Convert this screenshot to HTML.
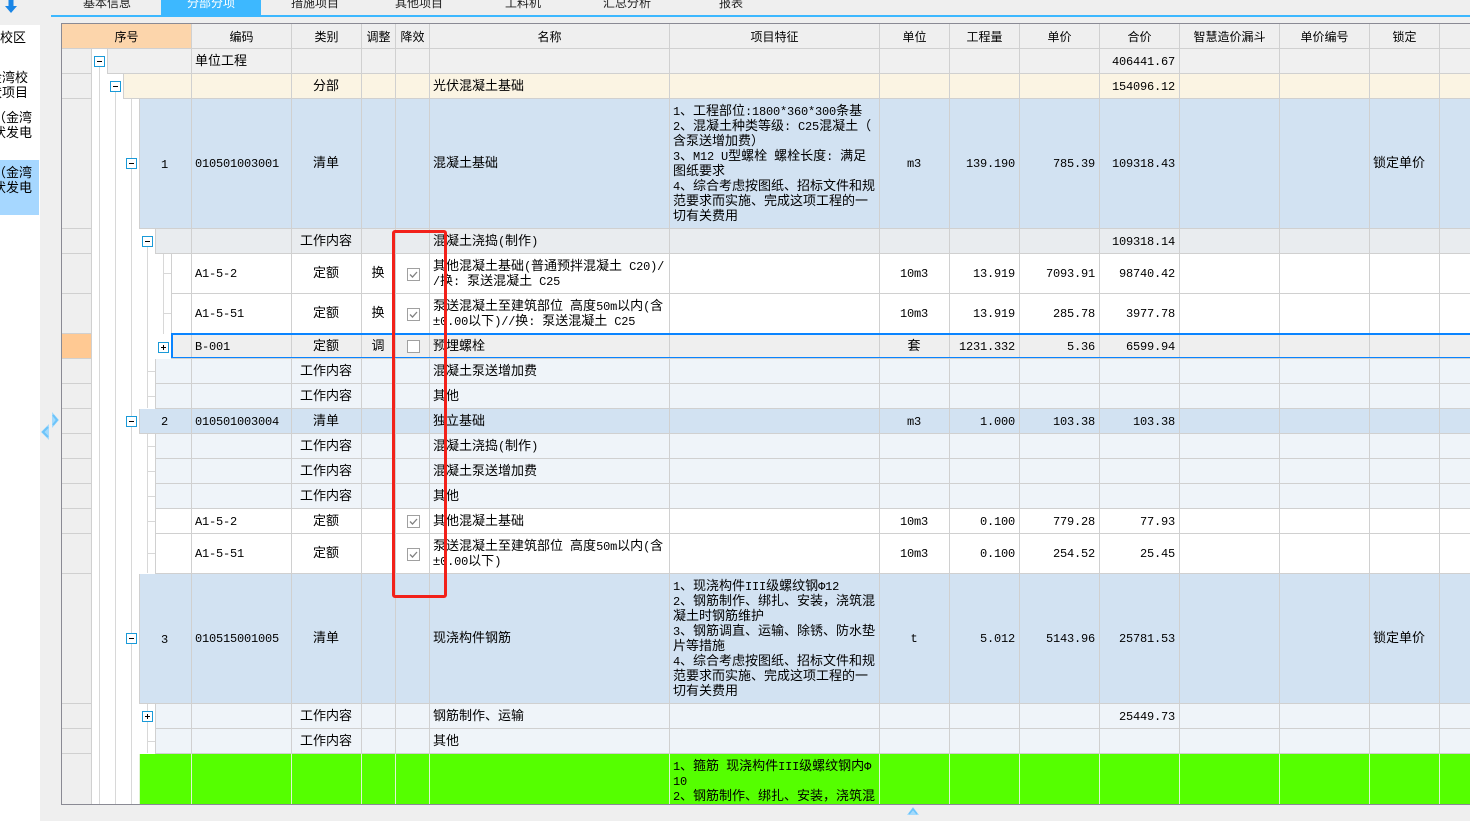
<!DOCTYPE html>
<html lang="zh">
<head>
<meta charset="utf-8">
<title>分部分项</title>
<style>
html,body{margin:0;padding:0;background:#efefef}
body{width:1470px;height:821px;position:relative;overflow:hidden;font-family:"Liberation Sans","WenQuanYi Zen Hei","Noto Sans CJK SC",sans-serif;font-size:13px;color:#000}
#side{position:absolute;left:0;top:25px;width:40px;height:796px;background:#fff;overflow:hidden}
#side div{position:absolute;left:-70px;width:102px;text-align:right;white-space:nowrap;line-height:15px}
#side #sel{left:0;top:135px;width:39px;height:55px;background:#a6d7ff}
.tab{position:absolute;top:-4px;height:14px;line-height:14px;font-size:12px;color:#222;white-space:nowrap}
#active{position:absolute;left:161px;top:0;width:100px;height:15px;background:#3db8ff}
#bar{position:absolute;left:51px;top:15px;width:1419px;height:2px;background:#3db8ff}
#grid{position:absolute;left:61px;top:23px;width:1409px;height:780px;border-top:1px solid #8a8a94;border-left:1px solid #8a8a94;border-bottom:1px solid #8a8a94;box-sizing:content-box;overflow:hidden;background:#fff}
#layer{position:absolute;left:-62px;top:-24px;width:1470px;height:821px}
.b{position:absolute;box-sizing:border-box;border-left:1px solid #d0d0d0;border-bottom:1px solid #d0d0d0;display:block}
.v{position:absolute;width:1px;background:#d8d8d8;display:block}
.h{position:absolute;height:1px;width:8px;background:#d8d8d8;display:block}
table{position:absolute;left:0;top:0;border-collapse:separate;border-spacing:0;table-layout:fixed;width:1409px}
td{box-sizing:border-box;padding:0 4px 2px 3px;border-right:1px solid #d0d0d0;border-bottom:1px solid #d0d0d0;vertical-align:middle;white-space:nowrap;overflow:hidden;line-height:15px;font-size:13px}
td.c{text-align:center;padding:0 1px 2px 0}
td.r{text-align:right}
td.t{background:transparent!important;border-bottom:0;padding:0 0 2px 46px;text-align:center}
td.n{background:#efefef!important}
tr.hd td{background:#efefef;text-align:center;font-size:12px;padding:2px 0 0;color:#000}
tr.hd td.o{background:#fcd5ab}
tr.u td{background:#f0f0f0}
tr.f td{background:#fbf4e3}
tr.q td{background:#d2e2f2}
tr.w td{background:#e9ecef}
tr.g td{background:#eff4f9}
tr.d td{background:#fff}
tr.s td{background:#efefef}
tr.e td{background:#55ff00;border-color:#dff5d2;vertical-align:top;padding-top:4px}
tr.e td.n{border-color:#d0d0d0}
tr.e td.t{border-color:#dff5d2}
b{font-family:"Liberation Mono",monospace;font-weight:normal;font-size:12px;letter-spacing:-.2px;line-height:0}
.box{position:absolute;width:9px;height:9px;border:1px solid #1a9ad8;background:#fff;display:block;line-height:0}
.box:before{content:"";position:absolute;left:2px;top:4px;width:5px;height:1px;background:#000}
.p:after{content:"";position:absolute;left:4px;top:2px;width:1px;height:5px;background:#000}
.ck{display:inline-block;width:11px;height:11px;border:1px solid #a0a0a0;background:#fff;position:relative;vertical-align:middle;margin:3px 0 0 2px}
.ck svg{position:absolute;left:0;top:0}
#out{position:absolute;left:171px;top:333px;width:1320px;height:25px;box-sizing:border-box;border:2px solid #0a84ff;border-bottom-width:1px;pointer-events:none}
#red{position:absolute;left:392px;top:230px;width:55px;height:368px;box-sizing:border-box;border:3px solid #f2211a;border-radius:3px}
svg.abs{position:absolute}
</style>
</head>
<body>
<svg class="abs" style="left:5px;top:0" width="12" height="13" viewBox="0 0 12 13"><path d="M3.5 0h5v6H12L6 13 0 6h3.5z" fill="#1a86e6"/></svg>

<div class="tab" style="left:83px">基本信息</div>
<div id="active"></div>
<div class="tab" style="left:187px;color:#fff">分部分项</div>
<div class="tab" style="left:291px">措施项目</div>
<div class="tab" style="left:395px">其他项目</div>
<div class="tab" style="left:505px">工料机</div>
<div class="tab" style="left:603px">汇总分析</div>
<div class="tab" style="left:719px">报表</div>
<div id="bar"></div>

<div id="side">
<div id="sel"></div>
<div style="top:5px;width:96px">校区</div>
<div style="top:45px;width:98px">金湾校</div>
<div style="top:60px;width:98px">光伏项目</div>
<div style="top:85px">（金湾</div>
<div style="top:100px">光伏发电</div>
<div style="top:140px">（金湾</div>
<div style="top:155px">光伏发电</div>
</div>

<svg class="abs" style="left:40px;top:410px" width="20" height="32" viewBox="0 0 20 32">
<path d="M12 2l7 8-7 8z" fill="#a4dafc"/><path d="M13 5l4 5-4 5" fill="none" stroke="#6cc4fa" stroke-width="2"/>
<path d="M9 14l-8 8 8 8z" fill="#a4dafc"/><path d="M8 17l-5 5 5 5" fill="none" stroke="#6cc4fa" stroke-width="2"/>
</svg>
<svg class="abs" style="left:907px;top:807px" width="12" height="9" viewBox="0 0 12 9"><path d="M6 0l6 8H0z" fill="#a4dafc"/><path d="M2 7l4-5 4 5" fill="none" stroke="#6cc4fa" stroke-width="1.6"/></svg>

<div id="grid">
<div id="layer">
<i class="b" style="left:107px;top:49px;width:84px;height:25px;background:#f0f0f0"></i>
<i class="b" style="left:123px;top:74px;width:68px;height:25px;background:#fbf4e3"></i>
<i class="b" style="left:139px;top:99px;width:52px;height:130px;background:#d2e2f2"></i>
<i class="b" style="left:155px;top:229px;width:36px;height:25px;background:#e9ecef"></i>
<i class="b" style="left:171px;top:254px;width:20px;height:40px;background:#fff"></i>
<i class="b" style="left:171px;top:294px;width:20px;height:40px;background:#fff"></i>
<i class="b" style="left:171px;top:334px;width:20px;height:25px;background:#efefef"></i>
<i class="b" style="left:155px;top:359px;width:36px;height:25px;background:#eff4f9"></i>
<i class="b" style="left:155px;top:384px;width:36px;height:25px;background:#eff4f9"></i>
<i class="b" style="left:139px;top:409px;width:52px;height:25px;background:#d2e2f2"></i>
<i class="b" style="left:155px;top:434px;width:36px;height:25px;background:#eff4f9"></i>
<i class="b" style="left:155px;top:459px;width:36px;height:25px;background:#eff4f9"></i>
<i class="b" style="left:155px;top:484px;width:36px;height:25px;background:#eff4f9"></i>
<i class="b" style="left:155px;top:509px;width:36px;height:25px;background:#fff"></i>
<i class="b" style="left:155px;top:534px;width:36px;height:40px;background:#fff"></i>
<i class="b" style="left:139px;top:574px;width:52px;height:130px;background:#d2e2f2"></i>
<i class="b" style="left:155px;top:704px;width:36px;height:25px;background:#eff4f9"></i>
<i class="b" style="left:155px;top:729px;width:36px;height:25px;background:#eff4f9"></i>
<i class="b" style="left:139px;top:754px;width:52px;height:60px;background:#55ff00;border-color:#dff5d2"></i>

<i class="v" style="left:99px;top:66px;height:740px"></i>
<i class="v" style="left:115px;top:91px;height:715px"></i>
<i class="v" style="left:131px;top:99px;height:707px"></i>
<i class="v" style="left:147px;top:247px;height:161px"></i>
<i class="v" style="left:147px;top:434px;height:139px"></i>
<i class="v" style="left:147px;top:704px;height:49px"></i>
<i class="v" style="left:163px;top:254px;height:80px"></i>
<i class="h" style="left:163px;top:273px"></i>
<i class="h" style="left:163px;top:313px"></i>
<i class="h" style="left:147px;top:371px"></i>
<i class="h" style="left:147px;top:396px"></i>
<i class="h" style="left:147px;top:446px"></i>
<i class="h" style="left:147px;top:471px"></i>
<i class="h" style="left:147px;top:496px"></i>
<i class="h" style="left:147px;top:521px"></i>
<i class="h" style="left:147px;top:553px"></i>
<i class="h" style="left:147px;top:741px"></i>

<table style="left:62px;top:24px">
<colgroup><col style="width:30px"><col style="width:100px"><col style="width:100px"><col style="width:70px"><col style="width:34px"><col style="width:34px"><col style="width:240px"><col style="width:210px"><col style="width:70px"><col style="width:70px"><col style="width:80px"><col style="width:80px"><col style="width:100px"><col style="width:90px"><col style="width:70px"><col style="width:31px"></colgroup>
<tr class="hd" style="height:25px"><td class="o" colspan="2">序号</td><td>编码</td><td>类别</td><td>调整</td><td>降效</td><td>名称</td><td>项目特征</td><td>单位</td><td>工程量</td><td>单价</td><td>合价</td><td>智慧造价漏斗</td><td>单价编号</td><td>锁定</td><td></td></tr>
<tr class="u" style="height:25px"><td class="n"></td><td class="t"></td><td>单位工程</td><td></td><td></td><td></td><td></td><td></td><td></td><td></td><td></td><td class="r"><b>406441.67</b></td><td></td><td></td><td></td><td></td></tr>
<tr class="f" style="height:25px"><td class="n"></td><td class="t"></td><td></td><td class="c">分部</td><td></td><td></td><td>光伏混凝土基础</td><td></td><td></td><td></td><td></td><td class="r"><b>154096.12</b></td><td></td><td></td><td></td><td></td></tr>
<tr class="q" style="height:130px"><td class="n"></td><td class="t"><b>1</b></td><td><b>010501003001</b></td><td class="c">清单</td><td></td><td></td><td>混凝土基础</td><td><b>1</b>、工程部位<b>:1800*360*300</b>条基<br><b>2</b>、混凝土种类等级<b>: C25</b>混凝土（<br>含泵送增加费）<br><b>3</b>、<b>M12 U</b>型螺栓<b>&nbsp;</b>螺栓长度<b>:&nbsp;</b>满足<br>图纸要求<br><b>4</b>、综合考虑按图纸、招标文件和规<br>范要求而实施、完成这项工程的一<br>切有关费用</td><td class="c"><b>m3</b></td><td class="r"><b>139.190</b></td><td class="r"><b>785.39</b></td><td class="r"><b>109318.43</b></td><td></td><td></td><td>锁定单价</td><td></td></tr>
<tr class="w" style="height:25px"><td class="n"></td><td class="t"></td><td></td><td class="c">工作内容</td><td></td><td></td><td>混凝土浇捣<b>(</b>制作<b>)</b></td><td></td><td></td><td></td><td></td><td class="r"><b>109318.14</b></td><td></td><td></td><td></td><td></td></tr>
<tr class="d" style="height:40px"><td class="n"></td><td class="t"></td><td><b>A1-5-2</b></td><td class="c">定额</td><td class="c">换</td><td class="c"><span class="ck"><svg width="11" height="11" viewBox="0 0 11 11"><path d="M2 5.5l2.5 2.5L9 3" fill="none" stroke="#808080" stroke-width="1.3"/></svg></span></td><td>其他混凝土基础<b>(</b>普通预拌混凝土<b>&nbsp;C20)/</b><br><b>/</b>换<b>:&nbsp;</b>泵送混凝土<b>&nbsp;C25</b></td><td></td><td class="c"><b>10m3</b></td><td class="r"><b>13.919</b></td><td class="r"><b>7093.91</b></td><td class="r"><b>98740.42</b></td><td></td><td></td><td></td><td></td></tr>
<tr class="d" style="height:40px"><td class="n"></td><td class="t"></td><td><b>A1-5-51</b></td><td class="c">定额</td><td class="c">换</td><td class="c"><span class="ck"><svg width="11" height="11" viewBox="0 0 11 11"><path d="M2 5.5l2.5 2.5L9 3" fill="none" stroke="#808080" stroke-width="1.3"/></svg></span></td><td>泵送混凝土至建筑部位<b>&nbsp;</b>高度<b>50m</b>以内<b>(</b>含<br>±<b>0.00</b>以下<b>)//</b>换<b>:&nbsp;</b>泵送混凝土<b>&nbsp;C25</b></td><td></td><td class="c"><b>10m3</b></td><td class="r"><b>13.919</b></td><td class="r"><b>285.78</b></td><td class="r"><b>3977.78</b></td><td></td><td></td><td></td><td></td></tr>
<tr class="s" style="height:25px"><td class="n" style="background:#ffc993!important"></td><td class="t"></td><td><b>B-001</b></td><td class="c">定额</td><td class="c">调</td><td class="c"><span class="ck"></span></td><td>预埋螺栓</td><td></td><td class="c">套</td><td class="r"><b>1231.332</b></td><td class="r"><b>5.36</b></td><td class="r"><b>6599.94</b></td><td></td><td></td><td></td><td></td></tr>
<tr class="g" style="height:25px"><td class="n"></td><td class="t"></td><td></td><td class="c">工作内容</td><td></td><td></td><td>混凝土泵送增加费</td><td></td><td></td><td></td><td></td><td></td><td></td><td></td><td></td><td></td></tr>
<tr class="g" style="height:25px"><td class="n"></td><td class="t"></td><td></td><td class="c">工作内容</td><td></td><td></td><td>其他</td><td></td><td></td><td></td><td></td><td></td><td></td><td></td><td></td><td></td></tr>
<tr class="q" style="height:25px"><td class="n"></td><td class="t"><b>2</b></td><td><b>010501003004</b></td><td class="c">清单</td><td></td><td></td><td>独立基础</td><td></td><td class="c"><b>m3</b></td><td class="r"><b>1.000</b></td><td class="r"><b>103.38</b></td><td class="r"><b>103.38</b></td><td></td><td></td><td></td><td></td></tr>
<tr class="g" style="height:25px"><td class="n"></td><td class="t"></td><td></td><td class="c">工作内容</td><td></td><td></td><td>混凝土浇捣<b>(</b>制作<b>)</b></td><td></td><td></td><td></td><td></td><td></td><td></td><td></td><td></td><td></td></tr>
<tr class="g" style="height:25px"><td class="n"></td><td class="t"></td><td></td><td class="c">工作内容</td><td></td><td></td><td>混凝土泵送增加费</td><td></td><td></td><td></td><td></td><td></td><td></td><td></td><td></td><td></td></tr>
<tr class="g" style="height:25px"><td class="n"></td><td class="t"></td><td></td><td class="c">工作内容</td><td></td><td></td><td>其他</td><td></td><td></td><td></td><td></td><td></td><td></td><td></td><td></td><td></td></tr>
<tr class="d" style="height:25px"><td class="n"></td><td class="t"></td><td><b>A1-5-2</b></td><td class="c">定额</td><td></td><td class="c"><span class="ck"><svg width="11" height="11" viewBox="0 0 11 11"><path d="M2 5.5l2.5 2.5L9 3" fill="none" stroke="#808080" stroke-width="1.3"/></svg></span></td><td>其他混凝土基础</td><td></td><td class="c"><b>10m3</b></td><td class="r"><b>0.100</b></td><td class="r"><b>779.28</b></td><td class="r"><b>77.93</b></td><td></td><td></td><td></td><td></td></tr>
<tr class="d" style="height:40px"><td class="n"></td><td class="t"></td><td><b>A1-5-51</b></td><td class="c">定额</td><td></td><td class="c"><span class="ck"><svg width="11" height="11" viewBox="0 0 11 11"><path d="M2 5.5l2.5 2.5L9 3" fill="none" stroke="#808080" stroke-width="1.3"/></svg></span></td><td>泵送混凝土至建筑部位<b>&nbsp;</b>高度<b>50m</b>以内<b>(</b>含<br>±<b>0.00</b>以下<b>)</b></td><td></td><td class="c"><b>10m3</b></td><td class="r"><b>0.100</b></td><td class="r"><b>254.52</b></td><td class="r"><b>25.45</b></td><td></td><td></td><td></td><td></td></tr>
<tr class="q" style="height:130px"><td class="n"></td><td class="t"><b>3</b></td><td><b>010515001005</b></td><td class="c">清单</td><td></td><td></td><td>现浇构件钢筋</td><td><b>1</b>、现浇构件<b>III</b>级螺纹钢<b>Φ12</b><br><b>2</b>、钢筋制作、绑扎、安装，浇筑混<br>凝土时钢筋维护<br><b>3</b>、钢筋调直、运输、除锈、防水垫<br>片等措施<br><b>4</b>、综合考虑按图纸、招标文件和规<br>范要求而实施、完成这项工程的一<br>切有关费用</td><td class="c"><b>t</b></td><td class="r"><b>5.012</b></td><td class="r"><b>5143.96</b></td><td class="r"><b>25781.53</b></td><td></td><td></td><td>锁定单价</td><td></td></tr>
<tr class="g" style="height:25px"><td class="n"></td><td class="t"></td><td></td><td class="c">工作内容</td><td></td><td></td><td>钢筋制作、运输</td><td></td><td></td><td></td><td></td><td class="r"><b>25449.73</b></td><td></td><td></td><td></td><td></td></tr>
<tr class="g" style="height:25px"><td class="n"></td><td class="t"></td><td></td><td class="c">工作内容</td><td></td><td></td><td>其他</td><td></td><td></td><td></td><td></td><td></td><td></td><td></td><td></td><td></td></tr>
<tr class="e" style="height:60px"><td class="n"></td><td class="t"></td><td></td><td></td><td></td><td></td><td></td><td><b>1</b>、箍筋<b>&nbsp;</b>现浇构件<b>III</b>级螺纹钢内<b>Φ</b><br><b>10</b><br><b>2</b>、钢筋制作、绑扎、安装，浇筑混</td><td></td><td></td><td></td><td></td><td></td><td></td><td></td><td></td></tr>
</table>

<span class="box" style="left:94px;top:56px"></span>
<span class="box" style="left:110px;top:81px"></span>
<span class="box" style="left:126px;top:158px"></span>
<span class="box" style="left:142px;top:236px"></span>
<span class="box p" style="left:158px;top:342px"></span>
<span class="box" style="left:126px;top:416px"></span>
<span class="box" style="left:126px;top:633px"></span>
<span class="box p" style="left:142px;top:711px"></span>

<div id="out"></div>
</div>
</div>
<div id="red"></div>
</body>
</html>
